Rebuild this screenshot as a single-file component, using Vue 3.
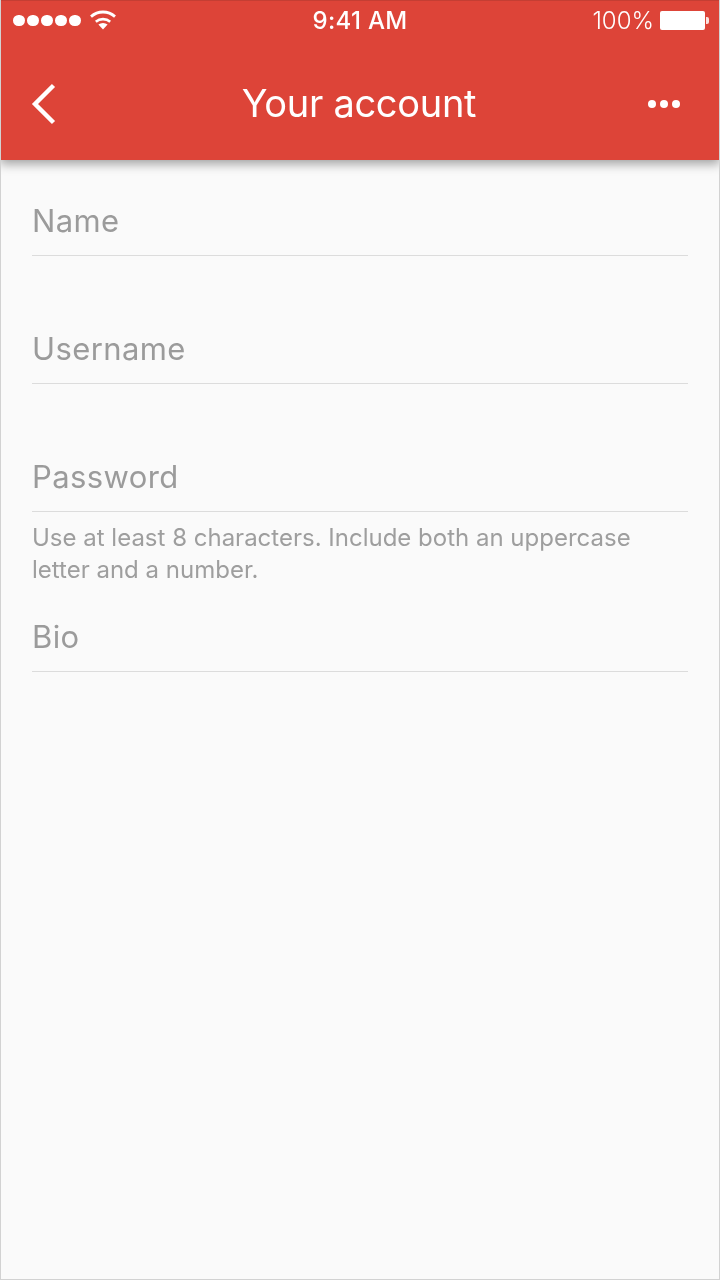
<script setup>
const fields = [
  { label: 'Name' },
  { label: 'Username' },
  { label: 'Password', help: 'Use at least 8 characters. Include both an uppercase letter and a number.' },
  { label: 'Bio' }
]
</script>

<template>
  <div class="screen">
    <header class="appbar">
      <div class="status">
        <div class="status-left">
          <span class="signal"><i v-for="n in 5" :key="n"></i></span>
          <svg class="wifi" width="28" height="20" viewBox="0 0 28 20">
            <path d="M14 19.5 9.4 14.6a7 7 0 0 1 9.2 0Z" fill="#fff"/>
            <path d="M6.8 11.8a11 11 0 0 1 14.4 0" fill="none" stroke="#fff" stroke-width="2.6"/>
            <path d="M2 6.6a18 18 0 0 1 24 0" fill="none" stroke="#fff" stroke-width="2.8"/>
          </svg>
        </div>
        <span class="time">9:41 AM</span>
        <div class="status-right">
          <span class="pct">100%</span>
          <span class="battery"><span class="cap"></span></span>
        </div>
      </div>
      <div class="nav">
        <svg class="back" width="28" height="42" viewBox="0 0 28 42">
          <path d="M24.5 2.5 6 21l18.5 18.5" fill="none" stroke="#fff" stroke-width="4.4"/>
        </svg>
        <h1 class="title">Your account</h1>
        <span class="more"><i></i><i></i><i></i></span>
      </div>
    </header>
    <main class="form">
      <div v-for="f in fields" :key="f.label" class="field">
        <div class="label">{{ f.label }}</div>
        <p v-if="f.help" class="help">{{ f.help }}</p>
      </div>
    </main>
  </div>
</template>

<style>
html, body { margin: 0; padding: 0; }
</style>

<style scoped>
.screen {
  box-sizing: border-box;
  width: 720px;
  height: 1280px;
  background: #fafafa;
  border: 1px solid #d2d2d2;
  border-top: 0;
  font-family: Inter, "Liberation Sans", sans-serif;
  overflow: hidden;
  display: flex;
  flex-direction: column;
}
.appbar {
  box-sizing: border-box;
  height: 160px;
  margin: 0 -1px;
  background: #dd4438;
  border: 1px solid #c43e33;
  border-bottom: 0;
  color: #fff;
  box-shadow: 0 4px 10px rgba(0, 0, 0, 0.36);
  display: flex;
  flex-direction: column;
}
.status {
  height: 39px;
  display: grid;
  grid-template-columns: 1fr auto 1fr;
  align-items: center;
  padding: 0 10px;
  will-change: transform;
}
.status-left { display: flex; align-items: center; gap: 8px; margin-left: 2px; }
.signal { display: flex; gap: 2.5px; }
.signal i { width: 11.5px; height: 11.5px; border-radius: 50%; background: #fff; }
.wifi { margin-top: -2px; }
.time { font-size: 24px; font-weight: 500; letter-spacing: 0.3px; }
.status-right { display: flex; align-items: center; justify-content: flex-end; gap: 6px; }
.pct { font-size: 24px; font-weight: 300; }
.battery {
  position: relative;
  width: 45px;
  height: 19px;
  background: #fff;
  border-radius: 2px;
  margin-right: 4px;
}
.cap {
  position: absolute;
  left: 46px;
  top: 6px;
  width: 3px;
  height: 7px;
  background: rgba(255,255,255,0.85);
  border-radius: 0 2px 2px 0;
}
.nav {
  flex: 1;
  display: grid;
  grid-template-columns: 1fr auto 1fr;
  align-items: center;
  padding: 8px 39px 0;
  will-change: transform;
}
.back { margin-left: -11px; }
.title {
  margin: -2px 2px 0 0;
  font-size: 38px;
  font-weight: 400;
  letter-spacing: -0.3px;
  text-align: center;
  line-height: 44px;
}
.more { display: flex; gap: 4px; justify-self: end; }
.more i { width: 8px; height: 8px; border-radius: 50%; background: #fff; }
.form {
  padding: 0 31px;
  display: flex;
  flex-direction: column;
  will-change: transform;
}
.field { position: relative; }
.label {
  box-sizing: border-box;
  height: 96px;
  padding: 0 0 14px;
  display: flex;
  align-items: flex-end;
  font-size: 31px;
  line-height: 40px;
  color: #9b9b9b;
  letter-spacing: 0.4px;
  border-bottom: 1px solid #dcdcdc;
}
.field + .field { margin-top: 32px; }
.help {
  margin: 10px 0 0;
  font-size: 24px;
  line-height: 32px;
  color: #9e9e9e;
  letter-spacing: 0;
}
.field:has(.help) + .field { margin-top: -10px; }
</style>
